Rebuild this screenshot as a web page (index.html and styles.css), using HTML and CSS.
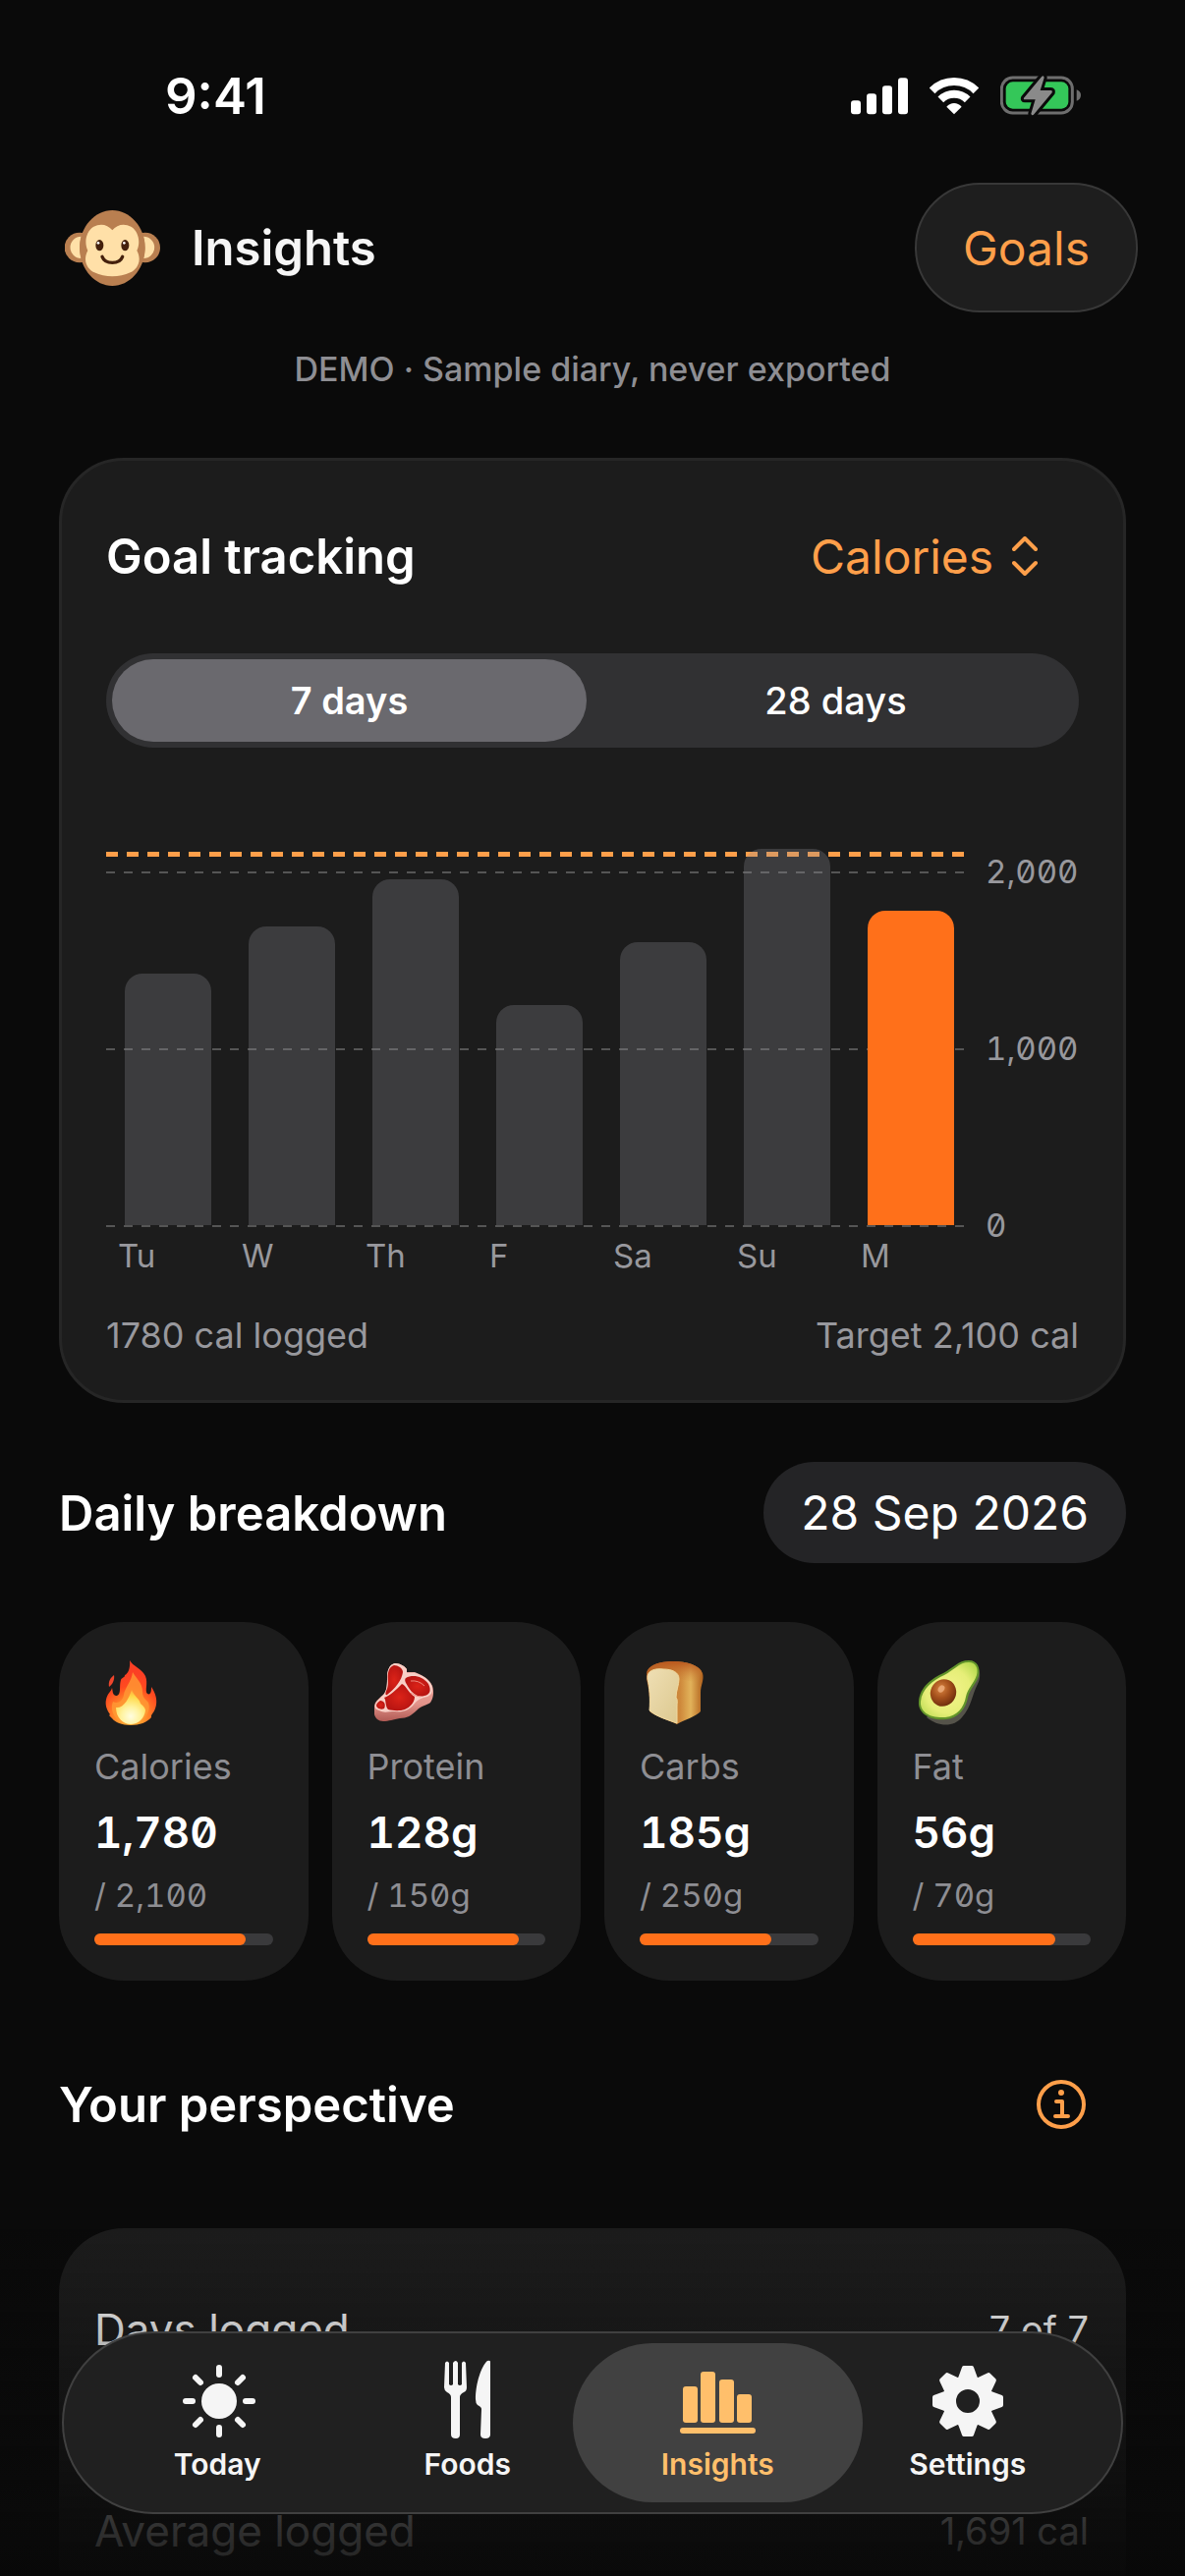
FILE: index.html
```html
<!DOCTYPE html>
<html lang="en">
<head>
<meta charset="utf-8">
<meta name="viewport" content="width=device-width, initial-scale=1">
<title>Insights</title>
<link rel="stylesheet" href="styles.css">
</head>
<body>
<div class="app">
  <div class="statusbar">
    <span class="clock">9:41</span>
    <div class="status-icons">
      <svg width="58" height="38" viewBox="0 0 174 114" fill="#fff" aria-hidden="true">
        <rect x="0" y="70" width="30" height="42" rx="9"/>
        <rect x="48" y="49" width="30" height="63" rx="9"/>
        <rect x="96" y="25" width="30" height="87" rx="9"/>
        <rect x="144" y="1" width="30" height="111" rx="9"/>
      </svg>
      <svg width="50" height="38" viewBox="0 0 150 114" fill="none" stroke="#fff" stroke-width="24" aria-hidden="true">
        <path d="M8 40 A95 95 0 0 1 142 40"/>
        <path d="M34 67 A58 58 0 0 1 116 67"/>
        <path d="M75 112 L52 89 Q62 78 75 78 Q88 78 98 89 Z" fill="#fff" stroke="none"/>
      </svg>
      <svg width="82" height="41" viewBox="0 0 246 123" aria-hidden="true">
        <rect x="4" y="6" width="216" height="108" rx="34" fill="none" stroke="#6e6e6e" stroke-width="9"/>
        <rect x="17" y="19" width="191" height="82" rx="21" fill="#34c759"/>
        <path d="M233 43 V77 Q246 72 246 60 Q246 48 233 43Z" fill="#6e6e6e"/>
        <path d="M127 2 L72 68 Q70 73 75 73 H107 L94 116 Q97 124 103 118 L158 52 Q160 45 154 45 H122 L134 6 Q133 -2 127 2Z" fill="#8a8a8a" stroke="#0a0a0a" stroke-width="18" stroke-linejoin="round" paint-order="stroke"/>
      </svg>
    </div>
  </div>

  <header class="header">
    <svg class="logo" width="97" height="77" viewBox="47 69 291 231" aria-hidden="true">
      <circle cx="92" cy="183" r="46" fill="#b97f50"/>
      <circle cx="292" cy="183" r="46" fill="#b97f50"/>
      <path d="M97 149 A33 33 0 0 0 97 216 Q88 183 97 149Z" fill="#ffe0a8"/>
      <path d="M287 149 A33 33 0 0 1 287 216 Q296 183 287 149Z" fill="#ffe0a8"/>
      <path d="M192 69 C245 69 292 120 292 183 C292 248 245 300 192 300 C139 300 92 248 92 183 C92 120 139 69 192 69Z" fill="#b97f50"/>
      <path d="M192 130 C178 112 155 108 135 119 C110 134 106 170 117 192 C100 225 117 250 137 259 C170 275 214 275 247 259 C267 250 284 225 267 192 C278 170 274 134 249 119 C229 108 206 112 192 130Z" fill="#ffe0a8"/>
      <ellipse cx="153" cy="176" rx="12" ry="17" fill="#44200c"/>
      <ellipse cx="231" cy="176" rx="12" ry="17" fill="#44200c"/>
      <circle cx="149" cy="169" r="4" fill="#fff"/>
      <circle cx="228" cy="169" r="4" fill="#fff"/>
      <path d="M161 211 Q168 229 192 229 Q216 229 223 211" fill="none" stroke="#44200c" stroke-width="10" stroke-linecap="round"/>
    </svg>
    <h1 class="title page-title">Insights</h1>
    <button class="goals" type="button">Goals</button>
  </header>

  <p class="demo">DEMO · Sample diary, never exported</p>

  <main class="content">
    <section class="card tracking">
      <div class="tracking-head">
        <h2 class="title">Goal tracking</h2>
        <label class="metric">
          <select aria-label="Metric">
            <option>Calories</option>
            <option>Protein</option>
            <option>Carbs</option>
            <option>Fat</option>
          </select>
          <svg width="26" height="40" viewBox="0 0 26 40" fill="none" stroke="currentColor" stroke-width="4" stroke-linecap="round" stroke-linejoin="round" aria-hidden="true">
            <path d="M2 13 L13 2 L24 13M2 27 L13 38 L24 27"/>
          </svg>
        </label>
      </div>

      <div class="segmented" role="radiogroup" aria-label="Range">
        <label class="segment"><input type="radio" name="range" checked><span>7 days</span></label>
        <label class="segment"><input type="radio" name="range"><span>28 days</span></label>
      </div>

      <div class="chart">
        <div class="plot">
          <i class="gridline at-2000"></i>
          <i class="gridline at-1000"></i>
          <i class="gridline at-0"></i>
          <i class="target"></i>
          <div class="bars">
            <div class="bar" style="height:56.8%"></div>
            <div class="bar" style="height:67.6%"></div>
            <div class="bar" style="height:78.2%"></div>
            <div class="bar" style="height:49.8%"></div>
            <div class="bar" style="height:64%"></div>
            <div class="bar" style="height:85.2%"></div>
            <div class="bar today" style="height:71.2%"></div>
          </div>
        </div>
        <div class="y-axis"><span>2,000</span><span>1,000</span><span>0</span></div>
        <div class="x-axis"><span>Tu</span><span>W</span><span>Th</span><span>F</span><span>Sa</span><span>Su</span><span>M</span></div>
      </div>

      <div class="tracking-foot"><span>1780 cal logged</span><span>Target 2,100 cal</span></div>
    </section>

    <div class="section-head">
      <h2 class="title">Daily breakdown</h2>
      <button class="date" type="button">28 Sep 2026</button>
    </div>

    <section class="stats">
      <article class="stat">
        <svg class="emoji" viewBox="0 0 72 72" aria-hidden="true">
          <defs>
            <radialGradient id="fire" cx="37" cy="60" r="44" gradientUnits="userSpaceOnUse">
              <stop offset="0" stop-color="#ffd23c"/><stop offset=".4" stop-color="#ff8428"/><stop offset=".7" stop-color="#ff4a20"/><stop offset="1" stop-color="#fb3f24"/>
            </radialGradient>
            <radialGradient id="fire-core" cx="37" cy="60" r="27" gradientUnits="userSpaceOnUse">
              <stop offset="0" stop-color="#fffde0"/><stop offset=".35" stop-color="#fff3a0"/><stop offset=".75" stop-color="#ffd848"/><stop offset="1" stop-color="#ffa83c"/>
            </radialGradient>
          </defs>
          <path d="M36 3 C39 9 48 11 52 19 C55 26 51 34 54 37 C58 39 58 33 58 30 C62 36 64 42 63 48 C62 54 60 56 58 59 L58 61 C54 66 46 69 37 69 C28 69 21 66 18 62 L15 59 L16 58 C12 53 11 47 12 43 C13 37 17 35 18 31 C19 34 18 38 22 39 C28 39 25 29 27 23 C28 20 31 21 31 18 C34 17 37 11 36 3Z" fill="url(#fire)"/>
          <path d="M20 18 C16 21 14 25 15 30 C18 28 21 23 20 18Z" fill="#f0452c"/>
          <path d="M39 15 C43 22 49 26 49 35 C49 42 53 43 55 46 C58 54 52 62 46 66 C40 69 31 68 27 66 C19 61 16 52 19 45 C24 48 29 44 30 38 C31 31 38 24 39 15Z" fill="#ff9a35" opacity=".8"/>
          <path d="M38 33 C40 39 46 42 47 47 C49 49 52 51 52 54 C51 62 45 68 37 68 C29 68 22 61 22 51 C30 52 35 42 38 33Z" fill="url(#fire-core)"/>
        </svg>
        <h3>Calories</h3>
        <strong>1,780</strong>
        <small>/ 2,100</small>
        <progress value="1780" max="2100" aria-label="Calories"></progress>
      </article>
      <article class="stat">
        <svg class="emoji" viewBox="0 0 72 72" aria-hidden="true">
          <defs>
            <linearGradient id="fat-edge" x1="0" y1="0" x2="0" y2="1"><stop offset="0" stop-color="#f3b7ae"/><stop offset=".7" stop-color="#e2938a"/><stop offset="1" stop-color="#b05a54"/></linearGradient>
            <radialGradient id="meat"><stop offset="0" stop-color="#dc2318"/><stop offset="1" stop-color="#b91512"/></radialGradient>
          </defs>
          <path d="M28 6 C33 6 38 9 40 12 L40 15 L48 15 C56 18 63 22 66 29 C68 35 67 42 64 46 C60 49 55 49 50 54 C45 59 40 62 33 62 C26 63 22 65 16 65 C11 65 8 62 7 58 L7 49 C8 44 13 41 17 37 C20 33 20 26 20 20 C20 14 22 7 28 6Z" fill="url(#fat-edge)"/>
          <path d="M28 6 C33 6 38 9 40 12 L40 16 L48 16 C56 18 62 22 65 28 C67 33 66 38 61 40 C55 41 51 43 47 48 C42 54 36 56 28 55 C21 55 17 57 12 54 C8 53 7 51 8 48 C9 44 14 41 17 37 C20 33 20 26 20 20 C20 14 22 7 28 6Z" fill="#f8cfc6"/>
          <path d="M27 8 C31 8 36 11 36 15 C35 23 28 32 20 38 C18 39 18 36 20 32 C22 26 20 21 21 16 C22 11 24 9 27 8Z" fill="url(#meat)"/>
          <path d="M39 21 C46 17 56 19 62 27 C65 33 64 38 58 39 C51 41 46 37 42 31 C39 26 37 23 39 21Z" fill="url(#meat)"/>
          <path d="M35 27 C39 28 42 37 48 40 C48 46 43 51 38 53 C32 55 25 54 21 53 C18 50 19 43 17 41 C23 39 29 33 35 27Z" fill="url(#meat)"/>
          <path d="M13 44 C17 44 19 48 17 52 C13 54 9 51 9 49 C9 47 11 45 13 44Z" fill="url(#meat)"/>
          <path d="M44 24 Q52 23 58 29M44 36 Q49 40 54 40" fill="none" stroke="#ef8a7e" stroke-width="1"/>
        </svg>
        <h3>Protein</h3>
        <strong>128g</strong>
        <small>/ 150g</small>
        <progress value="128" max="150" aria-label="Protein"></progress>
      </article>
      <article class="stat">
        <svg class="emoji" viewBox="0 0 72 72" aria-hidden="true">
          <defs>
            <linearGradient id="crust" x1="0" y1="0" x2="1" y2="0"><stop offset="0" stop-color="#a8571c"/><stop offset=".6" stop-color="#cf8a3c"/><stop offset=".78" stop-color="#e2b25a"/><stop offset="1" stop-color="#b0601c"/></linearGradient>
            <linearGradient id="crust-top" x1="0" y1="0" x2="0" y2="1"><stop offset="0" stop-color="#b9561c"/><stop offset="1" stop-color="#d08a40" stop-opacity="0"/></linearGradient>
            <linearGradient id="crumb" x1="0" y1="0" x2="1" y2="1"><stop offset="0" stop-color="#efdfb4"/><stop offset="1" stop-color="#dcc88f"/></linearGradient>
          </defs>
          <path d="M7 16 C8 8 20 4 34 4 C48 4 61 8 64 16 C66 23 62 28 62 36 L62 55 C58 60 44 64 38 68 C30 64 16 60 10 55 C11 42 9 30 7 22Z" fill="url(#crust)"/>
          <path d="M8 14 C10 8 20 4 34 4 C48 4 60 8 63 14 L60 26 L40 22 L8 18Z" fill="url(#crust-top)"/>
          <path d="M8 19 C9 13 16 11 24 12 C33 12 40 15 40 22 C40 28 37 34 37 41 C39 43 38 46 38 50 L38 67 C30 64 16 60 10 54 C11 42 10 30 8 22Z" fill="url(#crumb)" stroke="#f0d9a0" stroke-width="1"/>
        </svg>
        <h3>Carbs</h3>
        <strong>185g</strong>
        <small>/ 250g</small>
        <progress value="185" max="250" aria-label="Carbs"></progress>
      </article>
      <article class="stat">
        <svg class="emoji" viewBox="0 0 72 72" aria-hidden="true">
          <defs>
            <radialGradient id="flesh" cx="36" cy="34" r="38" gradientUnits="userSpaceOnUse"><stop offset="0" stop-color="#f4f48c"/><stop offset=".6" stop-color="#e6ee78"/><stop offset="1" stop-color="#b4d84c"/></radialGradient>
            <radialGradient id="pit" cx=".35" cy=".4" r=".7"><stop offset="0" stop-color="#d98440"/><stop offset=".5" stop-color="#a4501c"/><stop offset="1" stop-color="#6a2c0c"/></radialGradient>
          </defs>
          <path d="M60 6 C69 8 70 20 66 27 C60 38 60 50 50 61 C42 71 26 71 14 61Z" fill="#55534a"/>
          <path d="M57 3 C66 3 69 11 67 19 C64 28 58 32 56 41 C54 52 46 62 34 63 C18 65 5 57 6 45 C7 30 20 21 31 16 C41 11 46 3 57 3Z" fill="#62942a"/>
          <path d="M57 5 C64 5 67 11 65 18 C62 27 56 31 54 40 C52 51 45 60 33 61 C18 62 7 56 8 45 C9 32 21 23 32 18 C42 13 47 5 57 5Z" fill="url(#flesh)"/>
          <ellipse cx="31" cy="36" rx="13" ry="14" transform="rotate(25 31 36)" fill="url(#pit)"/>
          <ellipse cx="29" cy="32" rx="3" ry="4" transform="rotate(35 29 32)" fill="#efb080" opacity=".8"/>
        </svg>
        <h3>Fat</h3>
        <strong>56g</strong>
        <small>/ 70g</small>
        <progress value="56" max="70" aria-label="Fat"></progress>
      </article>
    </section>

    <div class="section-head tall">
      <h2 class="title">Your perspective</h2>
      <button class="info" type="button" aria-label="About your perspective">
        <svg width="52" height="52" viewBox="0 0 52 52" fill="none" stroke="currentColor" stroke-width="4" aria-hidden="true">
          <circle cx="26" cy="26" r="23"/>
          <circle cx="26" cy="14" r="3" fill="currentColor" stroke="none"/>
          <path d="M21 23 H27 V38 M20 38 H33" stroke-linecap="round" stroke-linejoin="round"/>
        </svg>
      </button>
    </div>

    <dl class="summary">
      <div><dt>Days logged</dt><dd>7 of 7</dd></div>
      <div><dt>Average logged</dt><dd>1,691 cal</dd></div>
    </dl>
  </main>

  <div class="fade"></div>
  <nav class="tabbar" aria-label="Main">
    <a class="tab" href="#today">
      <svg viewBox="-2 0 80 80" aria-hidden="true">
        <circle cx="40" cy="40" r="18" fill="currentColor"/>
        <path d="M40 6V13M40 67V74M6 40H13M67 40H74M16 16L21 21M59 59L64 64M64 16L59 21M21 59L16 64" stroke="currentColor" stroke-width="6" stroke-linecap="round"/>
      </svg>
      <span>Today</span>
    </a>
    <a class="tab" href="#foods">
      <svg viewBox="0 0 80 80" fill="currentColor" aria-hidden="true">
        <path d="M17 1 Q19 -2 21 1 V23 Q23 25 25 23 V1 Q28 -3 30 1 V23 Q32 25 34 23 V1 Q36 -2 38 1 L39 26 Q39 30 36 31 Q32 33 32 36 V74 Q32 78 28 78 Q23 78 23 74 V36 Q23 33 19 31 Q16 29 16 26Z"/>
        <path d="M63 0 V74 Q63 78 58 78 Q53 78 53 74 L54 48 Q54 46 50 44 Q48 42 48 38 C48 22 54 4 60 -1 Q63 -2 63 0Z"/>
      </svg>
      <span>Foods</span>
    </a>
    <a class="tab active" href="#insights" aria-current="page">
      <svg viewBox="0 0 80 80" fill="currentColor" aria-hidden="true">
        <rect x="5" y="25" width="15" height="37" rx="3"/>
        <rect x="23" y="10" width="15" height="52" rx="3"/>
        <rect x="42" y="18" width="15" height="44" rx="3"/>
        <rect x="60" y="33" width="15" height="29" rx="3"/>
        <rect x="2" y="67" width="77" height="6" rx="3"/>
      </svg>
      <span>Insights</span>
    </a>
    <a class="tab" href="#settings">
      <svg viewBox="0 0 80 80" aria-hidden="true">
        <circle cx="40" cy="40" r="19" fill="none" stroke="currentColor" stroke-width="14"/>
        <g fill="currentColor" stroke="currentColor" stroke-width="4" stroke-linejoin="round">
          <path d="M32 17 L36 6 H44 L48 17Z"/>
          <path d="M32 17 L36 6 H44 L48 17Z" transform="rotate(45 40 40)"/>
          <path d="M32 17 L36 6 H44 L48 17Z" transform="rotate(90 40 40)"/>
          <path d="M32 17 L36 6 H44 L48 17Z" transform="rotate(135 40 40)"/>
          <path d="M32 17 L36 6 H44 L48 17Z" transform="rotate(180 40 40)"/>
          <path d="M32 17 L36 6 H44 L48 17Z" transform="rotate(225 40 40)"/>
          <path d="M32 17 L36 6 H44 L48 17Z" transform="rotate(270 40 40)"/>
          <path d="M32 17 L36 6 H44 L48 17Z" transform="rotate(315 40 40)"/>
        </g>
      </svg>
      <span>Settings</span>
    </a>
  </nav>
</div>
</body>
</html>
```

FILE: styles.css
```css
:root {
  --bg: #0a0a0a;
  --card: #1c1c1c;
  --accent: #ff9f4a;
  --orange: #ff701a;
  --muted: #98989d;
}

* { box-sizing: border-box; }

body {
  margin: 0;
  background: var(--bg);
  color: #fff;
  font-family: Inter, "Noto Sans", sans-serif;
}

h1, h2, h3, p, dl, dd { margin: 0; font-weight: inherit; }

button, select {
  border: 0;
  background: none;
  color: inherit;
  font: inherit;
}

.app {
  height: 100vh;
  overflow: hidden auto;
  scrollbar-width: none;
}

.title {
  padding-top: 2px;
  font-size: 49px;
  line-height: 60px;
  font-weight: 600;
}

/* Status bar */
.statusbar {
  display: flex;
  align-items: flex-start;
  justify-content: space-between;
  height: 186px;
  padding: 67px 106px 0 168px;
}
.clock { font-size: 51px; line-height: 62px; font-weight: 600; }
.status-icons {
  display: flex;
  align-items: center;
  gap: 22px;
  padding-top: 10px;
}

/* Header */
.header {
  display: flex;
  align-items: center;
  height: 132px;
  padding: 0 48px 0 66px;
}
.page-title { flex: 1; margin-left: 32px; color: #f5f5f5; }
.goals {
  height: 132px;
  padding: 0 47px;
  border: 2px solid #383838;
  border-radius: 66px;
  background: #1e1e1e;
  color: var(--accent);
  font-size: 48px;
}

.demo {
  padding: 38px 60px 70px;
  color: #8e8e93;
  font-size: 34px;
  line-height: 40px;
  font-weight: 500;
  text-align: center;
}

.content {
  display: flex;
  flex-direction: column;
  gap: 60px;
  padding: 0 60px;
}

/* Goal tracking */
.card {
  border: 3px solid #262626;
  border-radius: 66px;
  background: var(--card);
}
.tracking { padding: 31px 45px 44px; }
.tracking-head {
  display: flex;
  align-items: center;
  justify-content: space-between;
  height: 132px;
}
.metric {
  display: flex;
  align-items: center;
  gap: 18px;
  padding-right: 42px;
  color: var(--accent);
  font-size: 48px;
}
.metric select { appearance: none; padding: 0; }

.segmented {
  display: flex;
  gap: 12px;
  height: 96px;
  margin-top: 33px;
  padding: 6px;
  border-radius: 48px;
  background: #313133;
}
.segment { flex: 1; display: flex; position: relative; }
.segment input {
  position: absolute;
  inset: 0;
  margin: 0;
  appearance: none;
}
.segment span {
  flex: 1;
  display: flex;
  align-items: center;
  justify-content: center;
  border-radius: 42px;
  font-size: 38px;
  font-weight: 500;
}
.segment input:checked + span { background: #6a696e; font-weight: 600; }

.chart {
  display: grid;
  grid-template: 450px 90px / 1fr 117px;
  margin-top: 36px;
}
.plot { position: relative; }
.gridline, .target { position: absolute; left: 0; right: 0; }
.gridline {
  height: 2px;
  margin-bottom: -2px;
  background: repeating-linear-gradient(90deg, #555 0 9px, transparent 9px 18px);
}
.at-2000 { bottom: 80%; }
.at-1000 { bottom: 40%; }
.at-0 { bottom: 0; }
.target {
  bottom: 84%;
  height: 5px;
  margin-bottom: -3px;
  background: repeating-linear-gradient(90deg, var(--accent) 0 12px, transparent 12px 21px);
}
.bars {
  position: relative;
  display: flex;
  align-items: flex-end;
  gap: 38px;
  height: 100%;
  padding: 0 10px 0 19px;
}
.bar {
  flex: 1;
  border-radius: 18px 18px 0 0;
  background: rgba(142, 142, 147, 0.29);
}
.bar.today { background: var(--orange); }

.y-axis {
  grid-area: 1 / 2 / 3 / 3;
  display: grid;
  grid-template-rows: repeat(3, 1fr);
  align-items: center;
  padding-left: 22px;
}
.x-axis {
  display: grid;
  grid-template-columns: repeat(7, 1fr);
  padding: 11px 0 0 12px;
  margin-right: -21px;
}
.y-axis, .x-axis { color: var(--muted); font-size: 33px; line-height: 40px; }
.y-axis, .stat strong, .stat small { font-feature-settings: "tnum", "zero"; }

.tracking-foot {
  display: flex;
  justify-content: space-between;
  color: var(--muted);
  font-size: 36px;
  line-height: 44px;
}

/* Section headings */
.section-head {
  display: flex;
  align-items: center;
  justify-content: space-between;
  height: 103px;
}
.section-head.tall { height: 132px; }
.date {
  height: 103px;
  padding: 0 38px;
  border-radius: 52px;
  background: #242426;
  font-size: 48px;
}
.info {
  display: grid;
  place-items: center;
  width: 132px;
  height: 132px;
  color: var(--accent);
}

/* Nutrient cards */
.stats {
  display: grid;
  grid-template-columns: repeat(4, 1fr);
  gap: 24px;
}
.stat {
  display: flex;
  flex-direction: column;
  padding: 36px;
  border-radius: 66px;
  background: var(--card);
}
.emoji { width: 72px; height: 72px; }
.stat h3 {
  margin-top: 17px;
  color: #8e8e93;
  font-size: 36px;
  line-height: 44px;
}
.stat strong {
  margin-top: 17px;
  font-size: 44px;
  line-height: 56px;
  font-weight: 600;
}
.stat small {
  margin-top: 14px;
  color: #8e8e93;
  font-size: 33px;
  line-height: 44px;
}
.stat progress {
  appearance: none;
  width: 100%;
  height: 12px;
  margin-top: 17px;
  border: 0;
}
.stat progress::-webkit-progress-bar { border-radius: 6px; background: #3a3a3c; }
.stat progress::-webkit-progress-value { border-radius: 6px; background: var(--orange); }

/* Summary list */
.summary {
  padding: 0 38px 0 36px;
  border-radius: 66px;
  background: var(--card);
}
.summary div {
  display: flex;
  align-items: center;
  justify-content: space-between;
  height: 205px;
}
.summary dt { font-size: 44px; }
.summary dd { font-size: 38px; }

/* Bottom bar floats over the scrolling content */
.fade {
  position: fixed;
  inset: auto 0 0;
  height: 354px;
  background: linear-gradient(rgba(10, 10, 10, 0), rgba(10, 10, 10, 0.25) 30%, rgba(10, 10, 10, 0.84) 85%, rgba(8, 8, 8, 0.9));
  pointer-events: none;
}
.tabbar {
  position: fixed;
  inset: auto 63px 63px;
  display: flex;
  height: 186px;
  padding: 10px 29px;
  border: 2px solid #404040;
  border-radius: 93px;
  background: #202020;
}
.tab {
  position: relative;
  flex: 1;
  display: flex;
  flex-direction: column;
  align-items: center;
  padding-top: 19px;
  color: #f5f5f5;
  font-size: 30px;
  line-height: 36px;
  font-weight: 600;
  text-decoration: none;
}
.tab svg { position: relative; width: 80px; height: 80px; overflow: visible; }
.tab span { position: relative; margin-top: 6px; }
.tab.active { color: #ffbf6b; }
.tab.active::before {
  content: "";
  position: absolute;
  inset: 0 -20px;
  border-radius: 81px;
  background: #414141;
}
```
